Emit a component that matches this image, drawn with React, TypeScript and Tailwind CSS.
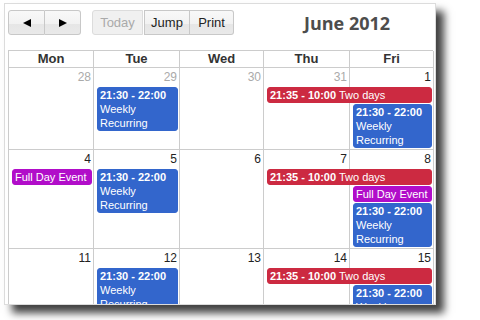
import React from "react";

type Ev = {
  col: string;
  row: string;
  color: string;
  time?: string;
  title: string;
  block?: boolean;
};

const cols = "grid grid-cols-[85px_86px_84px_86px_84px]";
const days = ["Mon", "Tue", "Wed", "Thu", "Fri"];

const blue = "bg-[#3366cc] border-[#3366cc]";
const red = "bg-[#cc2a41] border-[#cc2a41]";
const purple = "bg-[#b10dc9] border-[#b10dc9]";

type Week = {
  height: string;
  nums: { n: number; other?: boolean }[];
  events: Ev[];
};

const weeks: Week[] = [
  {
    height: "h-[82px]",
    nums: [{ n: 28, other: true }, { n: 29, other: true }, { n: 30, other: true }, { n: 31, other: true }, { n: 1 }],
    events: [
      { col: "col-start-2 col-span-1", row: "row-start-2 row-span-2", color: blue, time: "21:30 - 22:00", title: "Weekly Recurring", block: true },
      { col: "col-start-4 col-span-2", row: "row-start-2", color: red, time: "21:35 - 10:00", title: "Two days" },
      { col: "col-start-5 col-span-1", row: "row-start-3", color: blue, time: "21:30 - 22:00", title: "Weekly Recurring", block: true },
    ],
  },
  {
    height: "h-[99px]",
    nums: [{ n: 4 }, { n: 5 }, { n: 6 }, { n: 7 }, { n: 8 }],
    events: [
      { col: "col-start-1 col-span-1", row: "row-start-2", color: purple, title: "Full Day Event" },
      { col: "col-start-2 col-span-1", row: "row-start-2 row-span-3", color: blue, time: "21:30 - 22:00", title: "Weekly Recurring", block: true },
      { col: "col-start-4 col-span-2", row: "row-start-2", color: red, time: "21:35 - 10:00", title: "Two days" },
      { col: "col-start-5 col-span-1", row: "row-start-3", color: purple, title: "Full Day Event" },
      { col: "col-start-5 col-span-1", row: "row-start-4", color: blue, time: "21:30 - 22:00", title: "Weekly Recurring", block: true },
    ],
  },
  {
    height: "h-[99px]",
    nums: [{ n: 11 }, { n: 12 }, { n: 13 }, { n: 14 }, { n: 15 }],
    events: [
      { col: "col-start-2 col-span-1", row: "row-start-2 row-span-2", color: blue, time: "21:30 - 22:00", title: "Weekly Recurring", block: true },
      { col: "col-start-4 col-span-2", row: "row-start-2", color: red, time: "21:35 - 10:00", title: "Two days" },
      { col: "col-start-5 col-span-1", row: "row-start-3", color: blue, time: "21:30 - 22:00", title: "Weekly Recurring", block: true },
    ],
  },
];

function Arrow({ dir }: { dir: "left" | "right" }) {
  return (
    <svg width="8" height="8" viewBox="0 0 8 8">
      {dir === "left" ? <polygon points="8,0 8,8 0,4" fill="#000" /> : <polygon points="0,0 0,8 8,4" fill="#000" />}
    </svg>
  );
}

const btn =
  "h-[25px] flex items-center justify-center border border-[#c8c8c8] text-[13px] text-[#222] bg-[linear-gradient(#f8f8f8_0%,#f2f2f2_55%,#e6e6e6_56%,#e9e9e9_100%)]";

function Event({ ev }: { ev: Ev }) {
  return (
    <div
      className={`${ev.col} ${ev.row} self-start ml-[3px] mr-[2px] mb-[1px] border rounded-[3px] px-[2px] text-white text-[11px] leading-[14px] overflow-hidden ${ev.color}`}
    >
      {ev.time && <span className="font-bold">{ev.time}</span>}
      {ev.block ? <div className="w-[70px]">{ev.title}</div> : <span> {ev.title}</span>}
    </div>
  );
}

export default function App() {
  return (
    <div className="w-[480px] h-[320px] bg-white overflow-hidden pt-[3px] pl-[4px] font-['Liberation_Sans',Arial,sans-serif]">
      <div className="w-[432px] h-[302px] border border-[#dcdcdc] bg-white overflow-hidden pl-[3px] pt-[6px] pr-[1px] shadow-[8px_8px_8px_rgba(0,0,0,0.75)]">
        {/* toolbar */}
        <div className="flex items-center h-[25px]">
          <div className="flex">
            <div className={`${btn} w-[37px] rounded-l-[3px]`}>
              <Arrow dir="left" />
            </div>
            <div className={`${btn} w-[36px] border-l-0 rounded-r-[3px]`}>
              <Arrow dir="right" />
            </div>
          </div>
          <div className="flex ml-[11px]">
            <div className="h-[25px] w-[51px] flex items-center justify-center border border-[#dcdcdc] bg-[#f0f0f0] text-[13px] text-[#aaa] rounded-l-[3px]">
              Today
            </div>
            <div className={`${btn} w-[46px] ml-[1px]`}>Jump</div>
            <div className={`${btn} w-[44px] border-l-0 rounded-r-[3px]`}>Print</div>
          </div>
          <div className="ml-[70px] text-[18px] font-bold text-[#4d4d4d] font-['Open_Sans',sans-serif] leading-none">
            June 2012
          </div>
        </div>

        {/* grid */}
        <div className="mt-[15px] border-l border-t border-[#ccc] w-[425px]">
          <div className={cols}>
            {days.map((d) => (
              <div key={d} className="h-[17px] border-r border-b border-[#ccc] text-center text-[13px] font-bold text-[#333] leading-[16px]">
                {d}
              </div>
            ))}
          </div>
          {weeks.map((w, i) => (
            <div key={i} className={`relative ${w.height}`}>
              <div className={`${cols} h-full`}>
                {days.map((d) => (
                  <div key={d} className="border-r border-b border-[#ccc]" />
                ))}
              </div>
              <div className={`${cols} absolute inset-0 content-start overflow-hidden`}>
                {w.nums.map((n) => (
                  <div
                    key={n.n}
                    className={`row-start-1 h-[19px] pr-[3px] text-right text-[12px] leading-[19px] ${n.other ? "text-[#aaa]" : "text-[#222]"}`}
                  >
                    {n.n}
                  </div>
                ))}
                {w.events.map((ev, j) => (
                  <Event key={j} ev={ev} />
                ))}
              </div>
            </div>
          ))}
        </div>
      </div>
    </div>
  );
}
